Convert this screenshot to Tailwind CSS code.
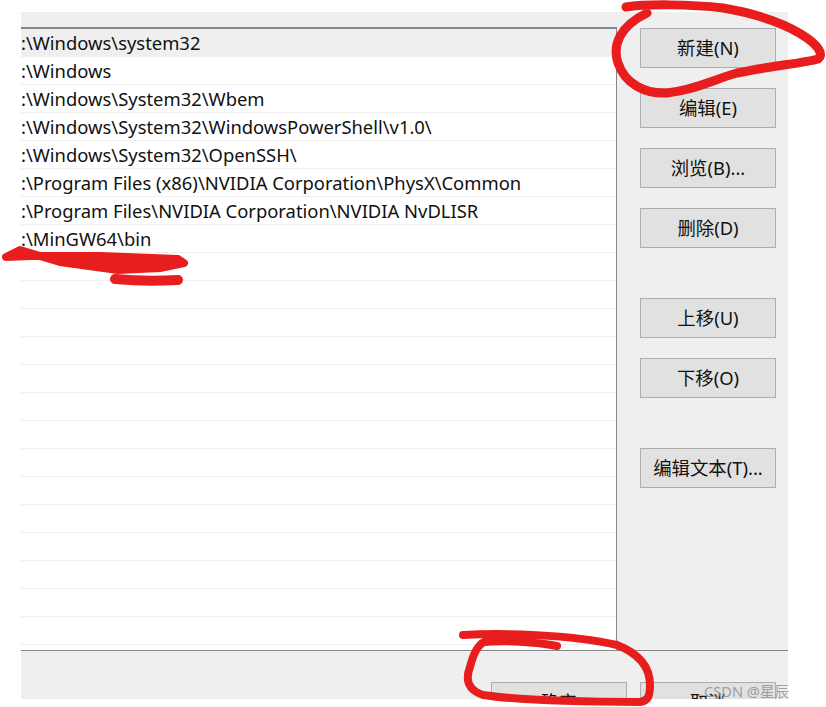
<!DOCTYPE html>
<html lang="en">
<head>
  <meta charset="UTF-8" />
  <title>编辑环境变量</title>
  <script src="https://cdn.jsdelivr.net/npm/@tailwindcss/browser@4"></script>
</head>
<body class="bg-white">
  <div class="relative w-[826px] h-[707px] overflow-hidden bg-white font-['Noto_Sans','Noto_Sans_CJK_SC',sans-serif] text-[#111]">
    <div class="absolute left-[21px] top-[12px] w-[767px] h-[687px] flex flex-col bg-[#efefef]">
      <div class="flex h-[638px]">
        <!-- path list -->
        <div class="w-[596px] pt-[15px] flex flex-col">
          <div class="bg-white border-t-2 border-[#85888c] border-r border-r-[#85888c] h-[623px] w-[596px] box-border overflow-hidden text-[18.4px] leading-[27px]">
            <div class="h-[28px] bg-[#efefef] whitespace-nowrap">:\Windows\system32</div>
            <div class="h-[28px] border-b border-[#efefef] whitespace-nowrap">:\Windows</div>
            <div class="h-[28px] border-b border-[#efefef] whitespace-nowrap">:\Windows\System32\Wbem</div>
            <div class="h-[28px] border-b border-[#efefef] whitespace-nowrap">:\Windows\System32\WindowsPowerShell\v1.0\</div>
            <div class="h-[28px] border-b border-[#efefef] whitespace-nowrap">:\Windows\System32\OpenSSH\</div>
            <div class="h-[28px] border-b border-[#efefef] whitespace-nowrap">:\Program Files (x86)\NVIDIA Corporation\PhysX\Common</div>
            <div class="h-[28px] border-b border-[#efefef] whitespace-nowrap">:\Program Files\NVIDIA Corporation\NVIDIA NvDLISR</div>
            <div class="h-[28px] border-b border-[#efefef] whitespace-nowrap">:\MinGW64\bin</div>
            <div class="h-[28px] border-b border-[#efefef]"></div>
            <div class="h-[28px] border-b border-[#efefef]"></div>
            <div class="h-[28px] border-b border-[#efefef]"></div>
            <div class="h-[28px] border-b border-[#efefef]"></div>
            <div class="h-[28px] border-b border-[#efefef]"></div>
            <div class="h-[28px] border-b border-[#efefef]"></div>
            <div class="h-[28px] border-b border-[#efefef]"></div>
            <div class="h-[28px] border-b border-[#efefef]"></div>
            <div class="h-[28px] border-b border-[#efefef]"></div>
            <div class="h-[28px] border-b border-[#efefef]"></div>
            <div class="h-[28px] border-b border-[#efefef]"></div>
            <div class="h-[28px] border-b border-[#efefef]"></div>
            <div class="h-[28px] border-b border-[#efefef]"></div>
            <div class="h-[28px] border-b border-[#efefef]"></div>
          </div>
        </div>
        <!-- side buttons -->
        <div class="flex flex-col pl-[23px] pt-[16px] text-[18.4px]">
          <button class="w-[136px] h-[40px] bg-[#e1e1e1] border border-[#adadad]">新建(N)</button>
          <button class="w-[136px] h-[40px] mt-[20px] bg-[#e1e1e1] border border-[#adadad]">编辑(E)</button>
          <button class="w-[136px] h-[40px] mt-[20px] bg-[#e1e1e1] border border-[#adadad]">浏览(B)...</button>
          <button class="w-[136px] h-[40px] mt-[20px] bg-[#e1e1e1] border border-[#adadad]">删除(D)</button>
          <button class="w-[136px] h-[40px] mt-[50px] bg-[#e1e1e1] border border-[#adadad]">上移(U)</button>
          <button class="w-[136px] h-[40px] mt-[20px] bg-[#e1e1e1] border border-[#adadad]">下移(O)</button>
          <button class="w-[136px] h-[40px] mt-[50px] bg-[#e1e1e1] border border-[#adadad]">编辑文本(T)...</button>
        </div>
      </div>
      <!-- bottom bar, cut off by the crop -->
      <div class="h-[49px] border-t border-[#85888c] flex justify-end overflow-hidden gap-[13px] pr-[12px] pt-[31px] text-[18px]">
        <button class="w-[136px] h-[40px] shrink-0 bg-[#e1e1e1] border border-[#adadad]">确定</button>
        <button class="w-[136px] h-[40px] shrink-0 bg-[#e1e1e1] border border-[#adadad]">取消</button>
      </div>
    </div>

    <!-- red pen annotations -->
    <svg class="absolute left-0 top-0" width="826" height="707" viewBox="0 0 826 707" fill="none" stroke="#e81e1e" stroke-linecap="round" stroke-linejoin="round">
      <path stroke-width="9" d="M626 7C645 4 690 4 723 8C760 14 790 26 807 38C818 46 824 54 818 59C805 63 770 66 737 73C715 79 695 90 667 93C645 94 625 84 618 63C612 45 620 26 647 13"/>
      <path stroke-width="8" fill="#e81e1e" d="M6 257L30 256L100 256L178 259L184 263L160 268L118 270L60 262L20 250Z"/>
      <path stroke-width="10" d="M115 279C135 281 160 281 178 280"/>
      <path stroke-width="8" d="M463 635C500 633 570 634 617 645C640 654 650 668 650 685C650 696 648 701 640 702C600 702 530 702 483 695C468 690 465 680 470 667C473 655 478 645 484 642C505 640 535 642 557 646"/>
    </svg>

    <!-- watermark -->
    <div class="absolute left-[704px] top-[682px] text-[14.6px] leading-[18px] text-[#8a8a8a]/80 whitespace-nowrap">CSDN @星辰</div>
  </div>
</body>
</html>
